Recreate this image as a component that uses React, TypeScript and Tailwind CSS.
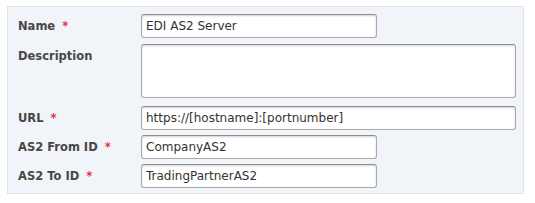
import React from 'react';

const fieldCls =
    "h-[24px] rounded-[3px] border border-[#a9a9a9] border-t-[#8f8f8f] bg-white px-[4px] text-[12px] text-[#333] shadow-[inset_0_1px_2px_rgba(0,0,0,0.18)] outline-none";

function Label({ text, required }: { text: string; required?: boolean }) {
    return (
        <div className="w-[123px] shrink-0 text-[11.5px] font-bold leading-[24px] text-[#474747]">
            {text}
            {required && <span className="ml-[7px] text-[#e0304e]">*</span>}
        </div>
    );
}

export default function App() {
    return (
        <div className="h-[203px] w-[535px] bg-white pl-[7px] pt-[6px]" style={{ fontFamily: '"DejaVu Sans", Verdana, sans-serif' }}>
            <div className="flex h-[188px] w-[517px] flex-col border border-[#e1e4e8] bg-[#f1f4f8] pl-[10px] pt-[7px]">
                <div className="flex items-start">
                    <Label text="Name" required />
                    <input className={`${fieldCls} w-[236px]`} defaultValue="EDI AS2 Server" readOnly />
                </div>
                <div className="mt-[6px] flex items-start">
                    <Label text="Description" />
                    <textarea className={`${fieldCls} h-[54px] w-[375px] resize-none`} readOnly />
                </div>
                <div className="mt-[8px] flex items-start">
                    <Label text="URL" required />
                    <input className={`${fieldCls} w-[375px]`} defaultValue="https://[hostname]:[portnumber]" readOnly />
                </div>
                <div className="mt-[5px] flex items-start">
                    <Label text="AS2 From ID" required />
                    <input className={`${fieldCls} w-[236px]`} defaultValue="CompanyAS2" readOnly />
                </div>
                <div className="mt-[5px] flex items-start">
                    <Label text="AS2 To ID" required />
                    <input className={`${fieldCls} w-[236px]`} defaultValue="TradingPartnerAS2" readOnly />
                </div>
            </div>
        </div>
    );
}
